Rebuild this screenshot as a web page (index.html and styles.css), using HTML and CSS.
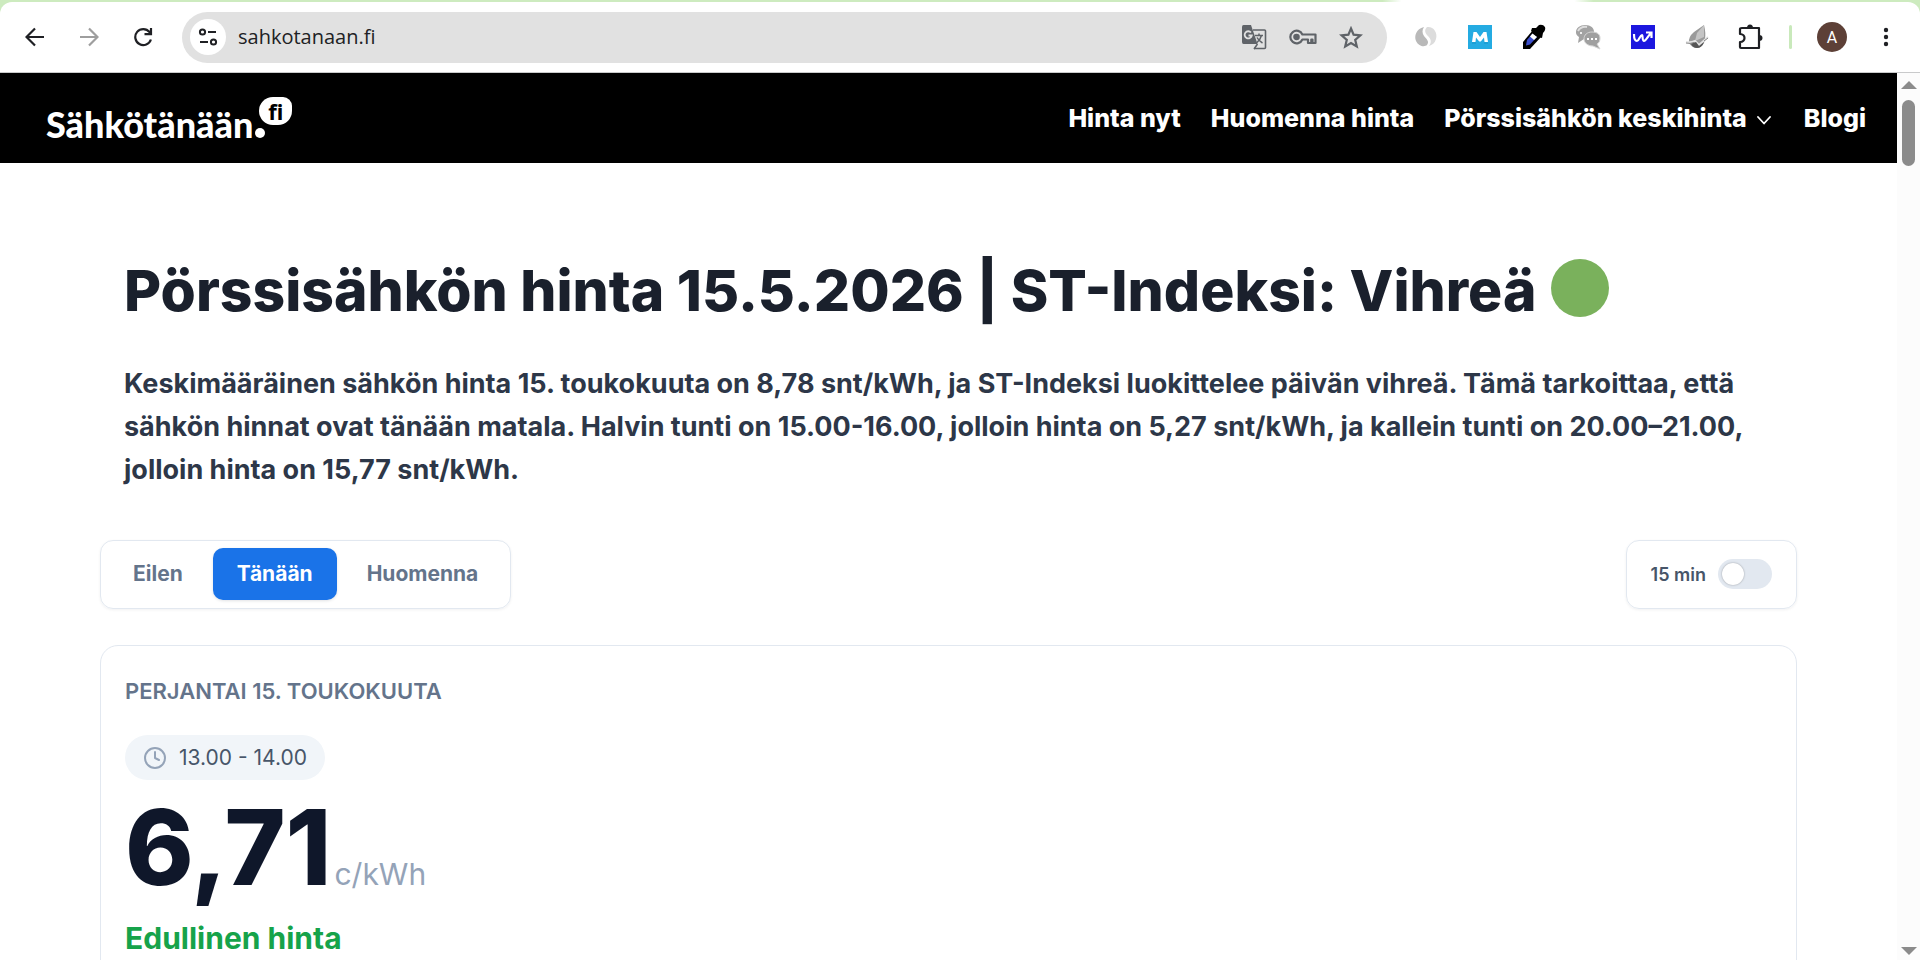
FILE: index.html
```html
<!DOCTYPE html>
<html lang="fi">
<head>
<meta charset="utf-8">
<title>Pörssisähkön hinta</title>
<link rel="stylesheet" href="styles.css">
</head>
<body>
<div class="toolbar">
  <button class="tool" aria-label="Takaisin"><svg width="20" height="20" viewBox="0 0 20 20" fill="none" stroke="#1f2024" stroke-width="2.200"><path d="M19 10H2M10 1.500L1.500 10L10 18.500"/></svg></button>
  <button class="tool" aria-label="Eteenpäin"><svg width="20" height="20" viewBox="0 0 20 20" fill="none" stroke="#9e9e9e" stroke-width="2.200"><path d="M1 10H18M10 1.500L18.500 10L10 18.500"/></svg></button>
  <button class="tool" aria-label="Lataa uudelleen"><svg width="20" height="20" viewBox="0 0 20 20" fill="none" stroke="#1f2024" stroke-width="2.200"><path d="M17.900 12.500A8 8 0 1 1 16.500 5L18 7M18 1V7.200H11.500"/></svg></button>
  <div class="address">
    <button class="site-info" aria-label="Sivuston tiedot"><svg width="20" height="18" viewBox="0 0 20 18" fill="none" stroke="#1f2024" stroke-width="2"><circle cx="4.500" cy="4" r="2.600"/><path d="M10 4H18M2 14H10"/><circle cx="15.500" cy="14" r="2.600"/></svg></button>
    <input class="url" type="text" value="sahkotanaan.fi" aria-label="Osoite">
    <button class="tool" aria-label="Käännä"><svg width="26" height="26" viewBox="0 0 26 26"><path d="M12 6H23.500Q24.500 6 24.500 7V23.500Q24.500 24.500 23.500 24.500H13" fill="none" stroke="#5f6368" stroke-width="1.600"/><path d="M2.500 1H10L16.500 20H2.500Q1 20 1 18V3Q1 1 2.500 1Z" fill="#5f6368"/><path d="M10 8.500A3.600 3.600 0 1 0 10.800 11.500H7.500" fill="none" stroke="#e1e1e1" stroke-width="1.800"/><path d="M14 11.500H22M18 9.500V11.500M20.500 11.500Q19 16.500 15.500 19M16 13.500Q18 17 21.500 19M13 25L16.500 20" fill="none" stroke="#5f6368" stroke-width="1.500"/></svg></button>
    <button class="tool" aria-label="Salasanat"><svg width="28" height="18" viewBox="0 0 28 18" fill="none" stroke="#5f6368" stroke-width="2.200"><path d="M13.400 6.500A6.300 6.300 0 1 0 13.400 11.500H19V15H22.300V11.500H23.500V15H26.500V6.500Z" stroke-linejoin="round"/><circle cx="7.500" cy="9" r="2.200" fill="#5f6368"/></svg></button>
    <button class="tool" aria-label="Lisää kirjanmerkki"><svg width="24" height="23" viewBox="0 0 24 23" fill="none" stroke="#5f6368" stroke-width="2.200"><path d="M12 2.500L14.600 8.700L21.500 9.300L16.200 13.800L17.800 20.500L12 17L6.200 20.500L7.800 13.800L2.500 9.300L9.400 8.700Z"/></svg></button>
  </div>
  <div class="extensions">
    <button class="tool" aria-label="Laajennus S"><svg width="24" height="24" viewBox="0 0 24 24"><path d="M10 2C2 4 0 11 2 16C5 22 11 22 13 20C16 16 12 14 10 11C8 8 8 5 10 2Z" fill="#b9b9b9"/><path d="M13 2C19 1 24 7 22 14C21 18 18 20 15 21C18 17 17 14 14 11C11 8 10 5 13 2Z" fill="#dcdcdc"/></svg></button>
    <button class="tool" aria-label="Laajennus M"><svg width="26" height="26" viewBox="0 0 26 26"><path d="M1 1H25V25H1Z" fill="#24abe2"/><path d="M5 18L6.500 8H9.500L13 13L16.500 8H19.500L21 18H17.500L17 13.500L13.800 17.500H12.200L9 13.500L8.500 18Z" fill="#fff"/><path d="M5 19H9M17 19H21" stroke="#1594c8"/></svg></button>
    <button class="tool" aria-label="Värinpoimija"><svg width="24" height="26" viewBox="0 0 24 26"><path d="M11 6L1 18V25H8L19 13Z" fill="#000"/><path d="M10 10L5 16L4 21.500L8 20.500L15 13Z" fill="#3c4fcc"/><path d="M10.500 9.500L15 13L12 16L8 12.500Z" fill="#fff"/><path d="M10 4L14 4L17 1Q21 0 23 3Q24 6 21 9L20 14L16 13L9 7Z" fill="#000"/></svg></button>
    <button class="tool" aria-label="Keskustelu"><svg width="26" height="26" viewBox="0 0 26 26"><path d="M10 1C16 1 19 4 19 8C19 13 14 15 9 15L3 19L4 13C1 11 1 9 1 8C1 4 5 1 10 1Z" fill="#a3a3a3"/><path d="M3 7Q6 2 12 3" fill="none" stroke="#ddd" stroke-width="2"/><path d="M17 8C23 8 25 11 25 14C25 17 24 19 22 20L25 25L18 22C12 22 9 18 9 15C9 11 12 8 17 8Z" fill="#a0a0a0" stroke="#d5d5d5"/><path d="M12 15H23" stroke="#fff" stroke-width="2" stroke-dasharray="2 2"/><path d="M5 9H9" stroke="#eee" stroke-width="2" stroke-dasharray="2 2"/></svg></button>
    <button class="tool" aria-label="Laajennus W"><svg width="26" height="26" viewBox="0 0 26 26"><path d="M1 1H25V25H1Z" fill="#1c17df"/><path d="M4 10C4 15 5 17 7 17C9 17 10 11 12 11C13 11 12 17 14 17C16 17 18 12 21 9M16 8.500H21.500V14" fill="none" stroke="#fff" stroke-width="2.200"/></svg></button>
    <button class="tool" aria-label="Laajennus L"><svg width="24" height="26" viewBox="0 0 24 26"><path d="M19 1L9 8Q3 13 4 19Q7 24 12 24Q19 23 20 15Q21 9 19 1Z" fill="#9a9a9a"/><path d="M19 1L12 9L10 17L19 13Z" fill="#c4c4c4"/><path d="M1 18Q6 19 10 17L14 21L23 13" fill="none" stroke="#e4e4e4" stroke-width="2"/><path d="M1 19Q5 20 9 18.500M19 17L23 14" fill="none" stroke="#888"/><path d="M6 20L11 18L14 22L19 18Q17 24 12 24Q8 24 6 20Z" fill="#555"/></svg></button>
    <button class="tool" aria-label="Laajennukset"><svg width="26" height="26" viewBox="0 0 26 26"><path d="M4 4H21V24H3Q2 24 2 23V18C8 18 8 10 2 10V5Q2 4 4 4Z" fill="none" stroke="#1f2024" stroke-width="2.200" stroke-linejoin="round"/><path d="M9 4A3 3.500 0 0 1 15 4ZM21 11A3.500 3 0 0 1 21 17Z" fill="#1f2024"/></svg></button>
  </div>
  <span class="divider"></span>
  <button class="avatar" aria-label="Profiili">A</button>
  <button class="tool" aria-label="Valikko"><svg width="6" height="20" viewBox="0 0 6 20" fill="#1f2024"><circle cx="3" cy="3" r="2.200"/><circle cx="3" cy="10" r="2.200"/><circle cx="3" cy="17" r="2.200"/></svg></button>
</div>
<div class="viewport">
  <div class="page">
    <header class="header">
      <a class="logo" href="#">Sähkötänään<span class="dot"></span><span class="bubble">fi</span></a>
      <nav class="nav">
        <a href="#">Hinta nyt</a>
        <a href="#">Huomenna hinta</a>
        <a href="#">Pörssisähkön keskihinta<svg class="chevron" width="14" height="9" viewBox="0 0 14 9" fill="none" stroke="#fff" stroke-width="1.800" stroke-linecap="round" stroke-linejoin="round"><path d="M1 1L7 7.500L13 1"/></svg></a>
        <a href="#">Blogi</a>
      </nav>
    </header>
    <main class="main">
      <section class="intro">
        <h1>Pörssisähkön hinta 15.5.2026 | ST-Indeksi: Vihreä <span class="status" role="img" aria-label="vihreä"></span></h1>
        <p>Keskimääräinen sähkön hinta 15. toukokuuta on 8,78 snt/kWh, ja ST-Indeksi luokittelee päivän vihreä. Tämä tarkoittaa, että sähkön hinnat ovat tänään matala. Halvin tunti on 15.00-16.00, jolloin hinta on 5,27 snt/kWh, ja kallein tunti on 20.00–21.00, jolloin hinta on 15,77 snt/kWh.</p>
      </section>
      <div class="controls">
        <div class="tabs">
          <button class="tab">Eilen</button>
          <button class="tab active">Tänään</button>
          <button class="tab">Huomenna</button>
        </div>
        <label class="interval" for="quarter">15 min <input class="switch" id="quarter" type="checkbox"></label>
      </div>
      <section class="card">
        <h2>PERJANTAI 15. TOUKOKUUTA</h2>
        <div class="time"><svg width="24" height="24" viewBox="0 0 24 24" fill="none" stroke="#94a3b8" stroke-width="2" stroke-linecap="round" stroke-linejoin="round"><circle cx="12" cy="12" r="10"/><path d="M12 6V12L16 14"/></svg>13.00 - 14.00</div>
        <div class="price"><strong>6,71</strong><span>c/kWh</span></div>
        <p class="verdict">Edullinen hinta</p>
      </section>
    </main>
  </div>
  <div class="scrollbar">
    <svg width="16" height="8" viewBox="0 0 16 8"><path d="M8 0L16 8H0Z" fill="#8b8b8b"/></svg>
    <span class="thumb"></span>
    <svg width="16" height="8" viewBox="0 0 16 8"><path d="M0 0H16L8 8Z" fill="#8b8b8b"/></svg>
  </div>
</div>
</body>
</html>
```
FILE: styles.css
```css
* { box-sizing: border-box; }
body {
  margin: 0;
  height: 100vh;
  display: flex;
  flex-direction: column;
  overflow: hidden;
  background: linear-gradient(90deg, #cdebbf 0 72%, #fff 73% 82%, #cdebbf 83%) 0 0 / 100% 16px no-repeat;
  font-family: Inter, "Liberation Sans", sans-serif;
}
button { font: inherit; border: 0; padding: 0; background: none; }
a { color: inherit; text-decoration: none; }
svg { display: block; flex: none; }

.toolbar {
  flex: none;
  display: flex;
  align-items: center;
  height: 71px;
  margin-top: 2px;
  padding: 0 24px 0 18px;
  background: #fff;
  border-radius: 12px 12px 0 0;
  border-bottom: 1px solid #c9cacb;
}
.toolbar > .tool { width: 34px; margin-right: 20px; display: flex; justify-content: center; }
.toolbar > .tool:last-child { width: 20px; margin: 0; }
.address {
  flex: 1;
  display: flex;
  align-items: center;
  gap: 22px;
  height: 51px;
  margin-left: 2px;
  padding: 0 24px 0 8px;
  border-radius: 26px;
  background: #e1e1e1;
}
.site-info {
  display: grid;
  place-items: center;
  width: 36px;
  height: 36px;
  border-radius: 50%;
  background: #fff;
}
.url {
  flex: 1;
  min-width: 0;
  margin-left: -10px;
  padding: 0 0 2px;
  border: 0;
  background: none;
  color: #202124;
  font: 20px "Open Sans", sans-serif;
}
.extensions { display: flex; align-items: center; gap: 29px; margin-left: 27px; }
.divider { width: 3px; height: 24px; margin: 0 25px; border-radius: 2px; background: #c9e9bb; }
.avatar {
  width: 30px;
  height: 30px;
  margin-right: 29px;
  border-radius: 50%;
  background: #5d4037;
  color: #fff;
  font: 16px Roboto, sans-serif;
}

.viewport { flex: 1; min-height: 0; display: flex; background: #fff; }
.page { flex: 1; min-width: 0; overflow: hidden; }
.scrollbar {
  width: 23px;
  display: flex;
  flex-direction: column;
  align-items: center;
  padding: 8px 0 5px;
  background: #fcfcfc;
}
.thumb { width: 13px; height: 66px; margin: 11px 0 auto; border-radius: 7px; background: #8b8b8b; }

.header {
  display: flex;
  align-items: center;
  justify-content: space-between;
  height: 90px;
  padding: 0 31px 0 46px;
  background: #000;
  color: #fff;
}
.logo {
  position: relative;
  display: flex;
  align-items: baseline;
  padding-top: 12px;
  font: 900 36px/44px Lato, sans-serif;
}
.dot { width: 10px; height: 10px; margin-left: 2px; border-radius: 50%; background: #fff; }
.bubble {
  position: absolute;
  left: 100%;
  top: 7px;
  width: 33px;
  height: 28px;
  margin-left: -6px;
  border-radius: 14px 9px 14px 14px;
  background: #fff;
  color: #000;
  font: 700 22px/28px "Noto Sans", sans-serif;
  text-align: center;
}
.nav { display: flex; gap: 30px; font-size: 25px; font-weight: 800; line-height: 38px; }
.nav a { display: flex; align-items: center; gap: 10px; }
.chevron { margin: 4px 3px 0 0; }

.main { padding: 92px 100px 0; }
.intro { padding: 0 24px; }
h1 {
  margin: 0 0 35px;
  color: #1a202c;
  font-size: 57px;
  font-weight: 850;
  line-height: 72px;
}
.status {
  display: inline-block;
  width: 58px;
  height: 58px;
  margin-left: 2px;
  border-radius: 50%;
  background: #7ab15c;
  vertical-align: -6px;
}
.intro p {
  margin: 0;
  color: #2d3748;
  font-size: 27px;
  font-weight: 700;
  line-height: 43px;
}
.controls { display: flex; justify-content: space-between; margin: 49px 0 36px; }
.tabs, .interval {
  display: flex;
  align-items: center;
  height: 69px;
  border: 1px solid #e2e8f0;
  border-radius: 13px;
  box-shadow: 0 1px 3px rgba(15, 23, 42, .06);
}
.tabs { gap: 6px; padding: 0 8px 1px; }
.tab {
  height: 52px;
  padding: 0 24px 2px;
  border-radius: 10px;
  color: #64748b;
  font-size: 21px;
  font-weight: 700;
}
.tab.active { background: #1a73e8; color: #fff; box-shadow: 0 1px 3px rgba(15, 23, 42, .12); }
.interval { gap: 12px; padding: 0 24px 1px; color: #475569; font-size: 18px; font-weight: 600; }
.switch {
  appearance: none;
  width: 54px;
  height: 30px;
  margin: 0;
  padding: 4px;
  border-radius: 15px;
  background: #e2e8f0;
}
.switch::before {
  content: "";
  display: block;
  width: 22px;
  height: 22px;
  border-radius: 50%;
  background: #fff;
  box-shadow: 0 0 2px rgba(0, 0, 0, .35);
}
.card {
  padding: 31px 24px;
  border: 1px solid #e2e8f0;
  border-radius: 18px;
}
.card h2 {
  margin: 0 0 30px;
  color: #64748b;
  font-size: 22px;
  font-weight: 600;
  line-height: 28px;
}
.time {
  display: inline-flex;
  align-items: center;
  gap: 12px;
  height: 45px;
  padding: 0 18px;
  border-radius: 23px;
  background: #f1f5f9;
  color: #475569;
  font-size: 21px;
}
.price { display: flex; align-items: baseline; gap: 3px; line-height: 108px; margin-top: 13px; }
.price strong { color: #0f172a; font-size: 104px; font-weight: 800; }
.price span { color: #94a3b8; font-size: 30px; line-height: 38px; }
.verdict {
  margin: 18px 0 0;
  color: #16a34a;
  font-size: 30px;
  font-weight: 700;
  line-height: 38px;
}
```
